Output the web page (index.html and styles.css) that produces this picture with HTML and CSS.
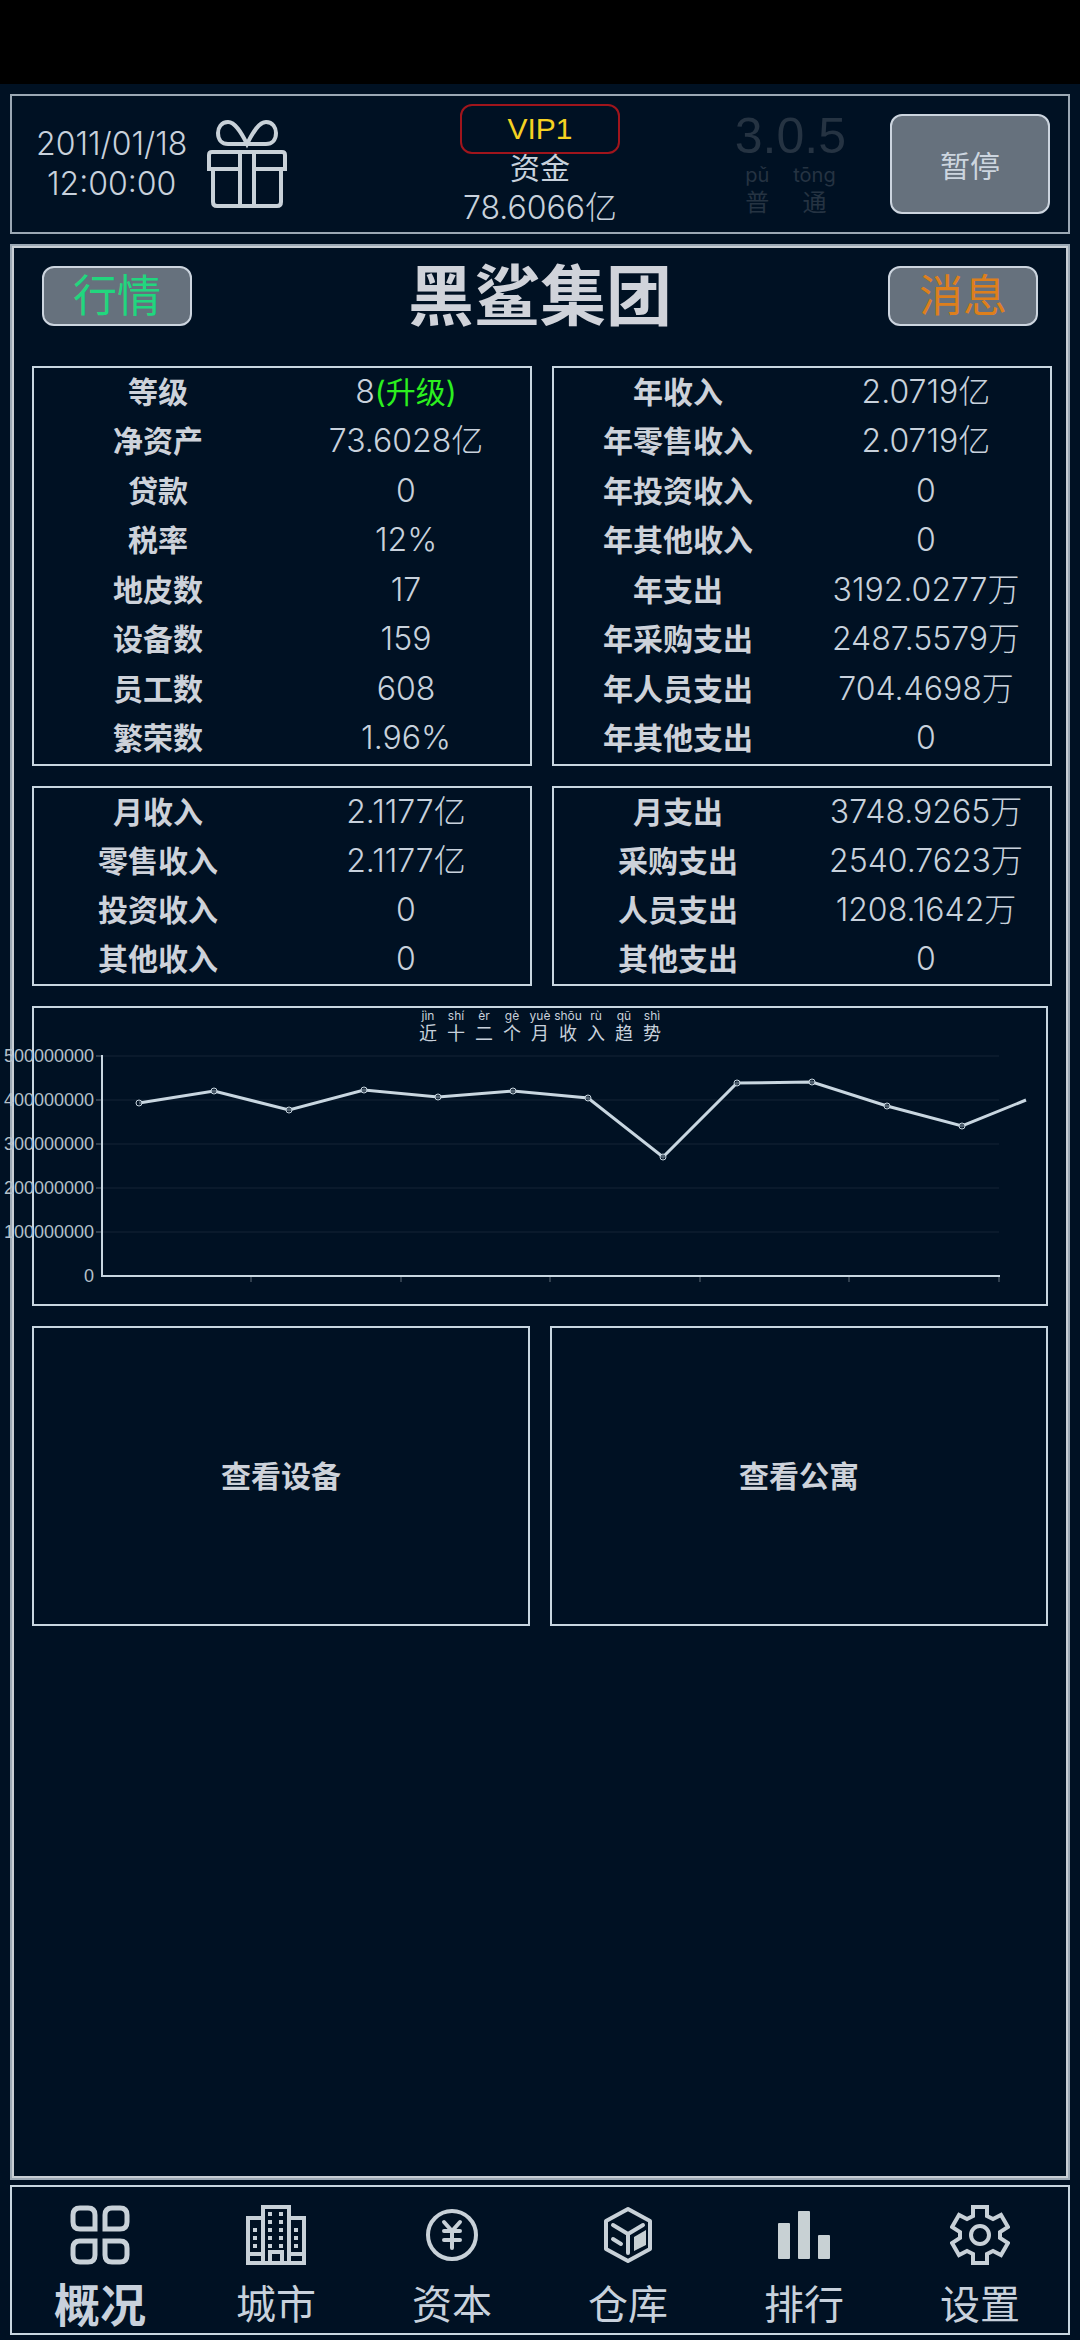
FILE: index.html
```html
<!DOCTYPE html>
<html lang="zh-CN">
<head>
    <meta charset="UTF-8">
    <meta name="viewport" content="width=device-width, initial-scale=1">
    <title>黑鲨集团</title>
    <link rel="stylesheet" href="styles.css">
</head>
<body>
    <div class="statusbar"></div>

    <header class="topbar">
        <div class="top-left">
            <div class="date">2011/01/18<br>12:00:00</div>
            <svg class="gift" viewBox="0 0 80 88">
                <path d="M40 24C34 12 28 2 21 2C14 2 11 8 11 13C11 20 15 24 21 24H59C65 24 69 20 69 13C69 8 66 2 59 2C52 2 46 12 40 24Z"/>
                <path d="M2 51V35Q2 32 5 32H75Q78 32 78 35V51M0 49H32M48 49H80M6 49V82Q6 86 10 86H70Q74 86 74 82V49M33 32V86M47 32V86"/>
            </svg>
        </div>
        <div class="top-center">
            <div class="vip">VIP1</div>
            <div class="money">资金</div>
            <div class="amount">78.6066亿</div>
        </div>
        <div class="top-right">
            <div class="version">
                <div class="number">3.0.5</div>
                <div class="mode">
                    <ruby>普<rt>pǔ</rt></ruby>
                    <ruby>通<rt>tōng</rt></ruby>
                </div>
            </div>
            <button class="btn pause">暂停</button>
        </div>
    </header>

    <main class="panel">
        <div class="title-row">
            <button class="btn small market">行情</button>
            <h1>黑鲨集团</h1>
            <button class="btn small news">消息</button>
        </div>

        <div class="tables">
            <table class="box year">
                <tr><th>等级</th><td>8<a class="upgrade" href="#">(升级)</a></td></tr>
                <tr><th>净资产</th><td>73.6028亿</td></tr>
                <tr><th>贷款</th><td>0</td></tr>
                <tr><th>税率</th><td>12%</td></tr>
                <tr><th>地皮数</th><td>17</td></tr>
                <tr><th>设备数</th><td>159</td></tr>
                <tr><th>员工数</th><td>608</td></tr>
                <tr><th>繁荣数</th><td>1.96%</td></tr>
            </table>
            <table class="box year">
                <tr><th>年收入</th><td>2.0719亿</td></tr>
                <tr><th>年零售收入</th><td>2.0719亿</td></tr>
                <tr><th>年投资收入</th><td>0</td></tr>
                <tr><th>年其他收入</th><td>0</td></tr>
                <tr><th>年支出</th><td>3192.0277万</td></tr>
                <tr><th>年采购支出</th><td>2487.5579万</td></tr>
                <tr><th>年人员支出</th><td>704.4698万</td></tr>
                <tr><th>年其他支出</th><td>0</td></tr>
            </table>
            <table class="box month">
                <tr><th>月收入</th><td>2.1177亿</td></tr>
                <tr><th>零售收入</th><td>2.1177亿</td></tr>
                <tr><th>投资收入</th><td>0</td></tr>
                <tr><th>其他收入</th><td>0</td></tr>
            </table>
            <table class="box month">
                <tr><th>月支出</th><td>3748.9265万</td></tr>
                <tr><th>采购支出</th><td>2540.7623万</td></tr>
                <tr><th>人员支出</th><td>1208.1642万</td></tr>
                <tr><th>其他支出</th><td>0</td></tr>
            </table>
        </div>

        <div class="box chart">
            <div class="chart-title">
                <ruby>近<rt>jìn</rt></ruby>
                <ruby>十<rt>shí</rt></ruby>
                <ruby>二<rt>èr</rt></ruby>
                <ruby>个<rt>gè</rt></ruby>
                <ruby>月<rt>yuè</rt></ruby>
                <ruby>收<rt>shōu</rt></ruby>
                <ruby>入<rt>rù</rt></ruby>
                <ruby>趋<rt>qū</rt></ruby>
                <ruby>势<rt>shì</rt></ruby>
            </div>
            <svg class="plot" viewBox="0 0 1012 260">
                <path class="grid" d="M68 12H965M68 56H965M68 100H965M68 144H965M68 188H965"/>
                <path class="ticks" d="M62 12H68M62 56H68M62 100H68M62 144H68M62 188H68M217 232V238M367 232V238M516 232V238M666 232V238M815 232V238M965 232V238"/>
                <path class="axis" d="M68 11V232H966"/>
                <g class="labels">
                    <text x="60" y="18">500000000</text>
                    <text x="60" y="62">400000000</text>
                    <text x="60" y="106">300000000</text>
                    <text x="60" y="150">200000000</text>
                    <text x="60" y="194">100000000</text>
                    <text x="60" y="238">0</text>
                </g>
                <polyline class="line" points="105,59 180,47 255,66 330,46 404,53 479,47 554,54 629,113 703,39 778,38 853,62 928,82 992,56"/>
                <g class="dots">
                    <circle cx="105" cy="59" r="3"/>
                    <circle cx="180" cy="47" r="3"/>
                    <circle cx="255" cy="66" r="3"/>
                    <circle cx="330" cy="46" r="3"/>
                    <circle cx="404" cy="53" r="3"/>
                    <circle cx="479" cy="47" r="3"/>
                    <circle cx="554" cy="54" r="3"/>
                    <circle cx="629" cy="113" r="3"/>
                    <circle cx="703" cy="39" r="3"/>
                    <circle cx="778" cy="38" r="3"/>
                    <circle cx="853" cy="62" r="3"/>
                    <circle cx="928" cy="82" r="3"/>
                </g>
            </svg>
        </div>

        <div class="tiles">
            <button class="box tile">查看设备</button>
            <button class="box tile">查看公寓</button>
        </div>
    </main>

    <nav class="tabs">
        <a class="active" href="#">
            <svg viewBox="0 0 60 60" stroke-width="5">
                <path d="M25 24H10Q3 24 3 17V10Q3 3 10 3H18Q25 3 25 10ZM35 24V10Q35 3 42 3H50Q57 3 57 10V17Q57 24 50 24ZM25 36V50Q25 57 18 57H10Q3 57 3 50V43Q3 36 10 36ZM35 36H50Q57 36 57 43V50Q57 57 50 57H42Q35 57 35 50Z"/>
            </svg>
            概况
        </a>
        <a href="#">
            <svg viewBox="0 0 60 60" stroke-width="4">
                <path d="M17 58V2H43V58M17 13H2V58H58V13H43M2 49H17M43 49H58M24 58V47H36V58"/>
                <path d="M24 7V43M35 7V43" stroke-dasharray="4 4"/>
                <path d="M9 23V43M50 23V43" stroke-dasharray="4 4"/>
            </svg>
            城市
        </a>
        <a href="#">
            <svg viewBox="0 0 60 60" stroke-width="4" stroke-linecap="round">
                <circle cx="30" cy="30" r="24"/>
                <path d="M22 17L30 26L38 17M22 26H38M22 35H38M30 26V43"/>
            </svg>
            资本
        </a>
        <a href="#">
            <svg viewBox="0 0 60 60" stroke-width="4" stroke-linecap="round" stroke-linejoin="round">
                <path d="M30 4L52 16V44L30 56L8 44V16ZM15 20L30 29L45 20M30 29V48M15 34L23 39"/>
                <path class="solid" stroke="none" d="M36 32L48 25V40L36 46Z"/>
            </svg>
            仓库
        </a>
        <a href="#">
            <svg viewBox="0 0 60 60" stroke="none">
                <g class="solid">
                    <rect x="4" y="18" width="12" height="36" rx="1"/>
                    <rect x="24" y="6" width="12" height="48" rx="1"/>
                    <rect x="44" y="30" width="12" height="24" rx="1"/>
                </g>
            </svg>
            排行
        </a>
        <a href="#">
            <svg viewBox="-30 -30 60 60" stroke-width="4">
                <path d="M-7 -28H7V-19L13 -16L21 -20L28 -8L20 -3V3L28 8L21 20L13 16L7 19V28H-7V19L-13 16L-21 20L-28 8L-20 3V-3L-28 -8L-21 -20L-13 -16L-7 -19Z"/>
                <circle r="9"/>
            </svg>
            设置
        </a>
    </nav>
</body>
</html>
```
FILE: styles.css
```css
* { box-sizing: border-box; }
body {
    font-family: Inter, "Noto Sans CJK SC", sans-serif;
    font-size: 30px;
    line-height: 40px;
    background: #001123;
    color: #c8d1dc;
    margin: 0;
    min-height: 100vh;
    display: flex;
    flex-direction: column;
}
a { color: inherit; text-decoration: none; }
svg { fill: none; stroke: #c8d1d8; }
.solid { fill: #c8d1d4; stroke: none; }
.statusbar { height: 84px; background: #000; }

/* header */
.topbar {
    display: grid;
    grid-template-columns: 1fr 160px 1fr;
    align-items: center;
    height: 140px;
    margin: 10px 10px 0;
    border: 2px solid #9ba8b4;
}
.top-left { display: flex; align-items: center; gap: 20px; padding-left: 24px; }
.date, .amount { font-size: 32px; font-weight: 300; text-align: center; }
.gift { width: 80px; height: 88px; stroke-width: 4; }
.top-center { text-align: center; padding-top: 4px; }
.vip {
    height: 50px;
    line-height: 46px;
    border: 2px solid #a0151c;
    border-radius: 12px;
    color: #f5d122;
    font-family: "Liberation Sans", sans-serif;
}
.money { margin-top: -6px; }
.amount { white-space: nowrap; }
.top-right { display: flex; align-items: center; justify-content: flex-end; gap: 44px; padding-right: 18px; }
.version { color: #253342; text-align: center; }
.number { font-family: "Liberation Sans", sans-serif; font-size: 50px; line-height: 50px; }
ruby { display: flex; flex-direction: column-reverse; align-items: center; }
rt { display: block; }
.mode { display: flex; justify-content: center; gap: 24px; font-size: 24px; line-height: 28px; }
.mode rt { font-size: 20px; line-height: 28px; }
.btn {
    font-family: inherit;
    background: #66717d;
    color: #ccd5df;
    border: 2px solid #ccd5df;
    border-radius: 12px;
    padding: 0;
    cursor: pointer;
}
.pause { width: 160px; height: 100px; font-size: 30px; }

/* main panel */
.panel {
    flex: 1;
    margin: 10px 10px 5px;
    padding: 20px 16px 20px 20px;
    border: 2px solid #9ba8b4;
    box-shadow: inset 0 0 0 2px #c8cfd5;
}
.title-row { display: flex; justify-content: space-between; align-items: center; height: 60px; padding: 0 14px 0 10px; margin-bottom: 40px; }
h1 { margin: 0; font-size: 66px; line-height: 60px; color: #d0d3da; }
.small { width: 150px; height: 60px; font-size: 44px; line-height: 52px; }
.market { color: #22d67e; }
.news { color: #dd7f1c; }
.box { border: 2px solid #c8d6e0; }
.tables { display: grid; grid-template-columns: 1fr 1fr; gap: 20px; }
table { width: 100%; table-layout: fixed; border-spacing: 0; }
.year { height: 400px; }
.month { height: 200px; }
th, td { padding: 0 0 2px; text-align: center; }
th { color: #cdd2da; }
td { font-size: 32px; font-weight: 300; }
.upgrade { color: #2cf01e; font-size: 30px; font-weight: 400; }

.chart { margin: 20px 4px 0 0; height: 300px; }
.chart-title { display: flex; justify-content: center; height: 36px; font-size: 18px; line-height: 20px; }
.chart-title ruby { width: 28px; }
.chart-title rt { font-size: 12px; line-height: 16px; }
.plot { display: block; width: 100%; overflow: visible; }
.grid { stroke: #0a1a2c; stroke-width: 2; }
.ticks { stroke: #5f6d79; stroke-width: 1; }
.axis { stroke: #c8d6e0; stroke-width: 2; }
.line { stroke: #c8d6e0; stroke-width: 3; }
.dots { stroke: #c8d6e0; stroke-width: 1; fill: #001123; fill-opacity: 0.6; }
.labels text { fill: #b4c0ca; stroke: none; font-family: "Liberation Sans", sans-serif; font-size: 18px; text-anchor: end; }

.tiles { display: grid; grid-template-columns: 1fr 1fr; gap: 20px; margin: 20px 4px 0 0; }
.tile { height: 300px; padding: 0 0 4px; background: none; color: #cdd2da; font-family: inherit; font-size: 30px; font-weight: bold; cursor: pointer; }

/* bottom tabs */
.tabs {
    display: grid;
    grid-template-columns: repeat(6, 1fr);
    height: 150px;
    margin: 0 10px 5px;
    border: 2px solid #c8d6e0;
}
.tabs a { display: flex; flex-direction: column; align-items: center; gap: 10px; padding-top: 18px; font-size: 40px; line-height: 60px; }
.tabs svg { width: 60px; height: 60px; }
.tabs .active { font-size: 46px; font-weight: bold; }
```
